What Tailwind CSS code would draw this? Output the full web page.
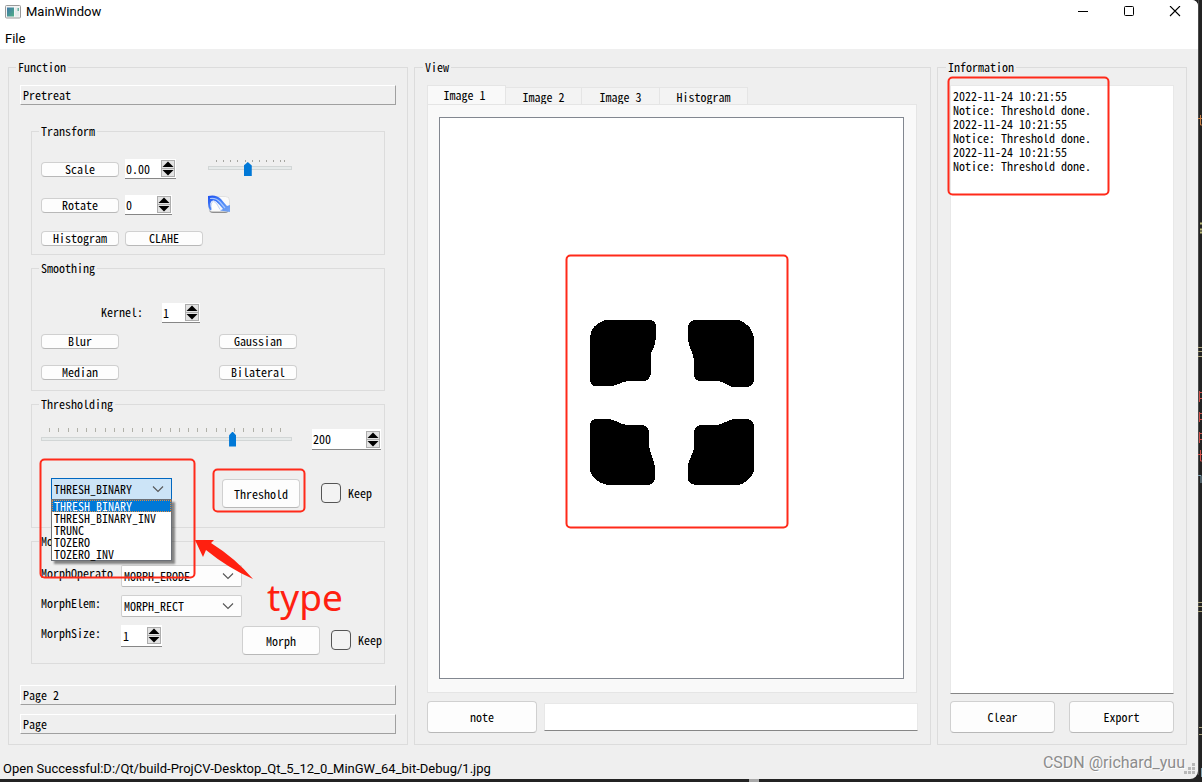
<!DOCTYPE html>
<html lang="en">
<head>
<meta charset="utf-8">
<title>MainWindow</title>
<script src="https://cdn.jsdelivr.net/npm/@tailwindcss/browser@4"></script>
</head>
<body class="relative flex h-screen flex-col overflow-hidden bg-[#232323] pr-1 pb-[3px] font-['Noto_Sans_Mono_CJK_SC','Liberation_Mono',monospace] text-[12px] leading-[14px] text-black">

<!-- arrow pair and chevron shared by the controls -->
<svg class="hidden" aria-hidden="true">
  <symbol id="up" viewBox="0 0 12 7"><path d="M6 .5 L11.500 6 H.5 Z" fill="#000"/></symbol>
  <symbol id="down" viewBox="0 0 12 7"><path d="M.5 1 H11.500 L6 6.500 Z" fill="#000"/></symbol>
  <symbol id="chev" viewBox="0 0 12 8"><path d="M1 1.5 L6 6.5 L11 1.5" fill="none" stroke="#555" stroke-width="1.1"/></symbol>
</svg>

<div class="flex min-h-0 flex-1 flex-col overflow-hidden rounded-tr-md rounded-br-lg bg-[#efefef]">
  <header class="bg-white font-['Roboto','Noto_Sans',sans-serif] text-[13px]">
    <div class="flex h-6 items-center pl-[5px]">
      <svg class="h-[14px] w-4" viewBox="0 0 16 14" aria-hidden="true">
        <defs><linearGradient id="g1" x1="0" y1="0" x2="1" y2="1"><stop offset="0" stop-color="#3f77a8"/><stop offset="1" stop-color="#4fae86"/></linearGradient></defs>
        <rect x=".5" y=".5" width="15" height="12.500" rx="1" fill="#f4f4f4" stroke="#9a9a9a"/>
        <rect x="2" y="2.500" width="7" height="9" fill="url(#g1)"/>
        <rect x="10" y="2.500" width="4" height="9" fill="#e4ecec"/><rect x="12.500" y="3" width="1.500" height="3" fill="#69b0a0"/>
      </svg>
      <h1 class="ml-[5px] flex-1">MainWindow</h1>
      <button class="flex h-6 w-[46px] items-center justify-center" aria-label="Minimize"><svg class="size-3" viewBox="0 0 12 12"><path d="M1 5.500H11" stroke="#000"/></svg></button>
      <button class="flex h-6 w-[46px] items-center justify-center" aria-label="Maximize"><svg class="size-3" viewBox="0 0 12 12"><rect x="1.500" y=".5" width="9" height="9" rx="1" fill="none" stroke="#000"/></svg></button>
      <button class="flex h-6 w-[46px] items-center justify-center" aria-label="Close"><svg class="size-3" viewBox="0 0 12 12"><path d="M1 0L11 10M11 0L1 10" stroke="#000" stroke-width="1.100"/></svg></button>
    </div>
    <nav class="flex h-[25px] items-center pt-1 pl-[5px]"><button>File</button></nav>
  </header>

  <main class="flex min-h-0 flex-1 gap-[6px] pt-[11px] pr-[11px] pl-2">

    <!-- Function -->
    <fieldset class="w-[400px] shrink-0 border border-[#dcdcdc] px-[11px] pb-[10px]">
      <legend class="-ml-1 px-[2px]">Function</legend>
      <div class="flex h-full flex-col pt-[11px]">
        <button class="h-5 border border-t-white border-r-[#a0a0a0] border-b-[#a0a0a0] border-l-white pl-[2px] text-left">Pretreat</button>

        <div class="mx-[11px] mt-[19px] flex flex-1 flex-col gap-[6px]">
          <fieldset class="h-[131px] border border-[#dcdcdc] px-[9px]">
            <legend class="-ml-[2px] px-[2px]">Transform</legend>
            <div class="flex flex-col gap-4 pt-[21px]">
              <div class="flex h-5 items-center">
                <button class="h-[15px] w-[78px] rounded-[4px] border border-[#d0d0d0] border-b-[#b8b8b8] bg-[#fdfdfd] pb-[2px] leading-[11px]">Scale</button>
                <div class="ml-[6px] flex h-5 w-[51px] items-center border-b border-[#868686] bg-white pr-px">
                  <input class="min-w-0 flex-1 pl-[1px] outline-none" value="0.00" aria-label="Scale factor">
                  <span class="flex h-[17px] w-[14px] flex-col border border-[#adadad] bg-[#e3e3e3]"><button class="flex-1 border-b border-[#adadad]" aria-label="Increase"><svg class="mx-auto h-[7px] w-3"><use href="#up"/></svg></button><button class="flex-1" aria-label="Decrease"><svg class="mx-auto h-[7px] w-3"><use href="#down"/></svg></button></span>
                </div>
                <div class="ml-8 flex h-[18px] w-[84px] flex-col">
                  <svg class="h-[2px] w-full" viewBox="0 0 84 2"><path d="M8.500 0V2M15.500 0V2M22.500 0V2M29.500 0V2M37.500 0V2M44.500 0V2M51.500 0V2M58.500 0V2M65.500 0V2M72.500 0V2M76.500 0V2" stroke="#a5a5a0"/></svg>
                  <input type="range" min="0" max="100" value="47" aria-label="Scale slider" class="h-3 w-full appearance-none bg-transparent [&::-webkit-slider-runnable-track]:h-1 [&::-webkit-slider-runnable-track]:border [&::-webkit-slider-runnable-track]:border-[#d2d6d6] [&::-webkit-slider-runnable-track]:bg-[#e6eaea] [&::-webkit-slider-thumb]:-mt-[5px] [&::-webkit-slider-thumb]:h-[14px] [&::-webkit-slider-thumb]:w-2 [&::-webkit-slider-thumb]:appearance-none [&::-webkit-slider-thumb]:bg-[#0078d7] [&::-webkit-slider-thumb]:[clip-path:polygon(50%_0,100%_25%,100%_100%,0_100%,0_25%)]">
                </div>
              </div>
              <div class="flex h-5 items-center">
                <button class="h-[15px] w-[78px] rounded-[4px] border border-[#d0d0d0] border-b-[#b8b8b8] bg-[#fdfdfd] pb-[2px] leading-[11px]">Rotate</button>
                <div class="ml-[6px] flex h-5 w-[47px] items-center border-b border-[#868686] bg-white pr-px">
                  <input class="min-w-0 flex-1 pl-[1px] outline-none" value="0" aria-label="Rotation angle">
                  <span class="flex h-[17px] w-[14px] flex-col border border-[#adadad] bg-[#e3e3e3]"><button class="flex-1 border-b border-[#adadad]" aria-label="Increase"><svg class="mx-auto h-[7px] w-3"><use href="#up"/></svg></button><button class="flex-1" aria-label="Decrease"><svg class="mx-auto h-[7px] w-3"><use href="#down"/></svg></button></span>
                </div>
                <button class="ml-9 pb-[2px]" aria-label="Rotate right">
                  <svg class="h-[18px] w-[22px]" viewBox="0 0 22 18">
                    <defs><linearGradient id="g2" x1="0" y1="0" x2="1" y2="1"><stop offset="0" stop-color="#1d4ff0"/><stop offset=".5" stop-color="#4a86f8"/><stop offset="1" stop-color="#7aa6f0"/></linearGradient></defs>
                    <rect x="1" y="3" width="20" height="15" rx="4" fill="#8f8f8f"/>
                    <rect x=".5" y="1.500" width="21" height="15" rx="4" fill="#fafafa" stroke="#d4d4d4" stroke-width=".6"/>
                    <path d="M0 1Q8 -1 13 4Q17 9 19 11L22 10V17L12 15.500L15 14Q11 9 8 6.500Q4 4 2.500 8Q2 11 4 14L2 15.500Q0 12 0 8Z" fill="url(#g2)"/>
                    <path d="M3.500 14Q2 8 5.500 6Q9 7.500 12 14.500" fill="#fdfdfd" stroke="#b4c8f2" stroke-width=".8"/>
                    <path d="M2 3.500Q8 2.500 12 7L17 13" fill="none" stroke="#a6c6ff" stroke-width="1.200"/>
                  </svg>
                </button>
              </div>
              <div class="flex gap-[6px]">
                <button class="h-[15px] w-[78px] rounded-[4px] border border-[#d0d0d0] border-b-[#b8b8b8] bg-[#fdfdfd] pb-[2px] leading-[11px]">Histogram</button>
                <button class="h-[15px] w-[78px] rounded-[4px] border border-[#d0d0d0] border-b-[#b8b8b8] bg-[#fdfdfd] pb-[2px] leading-[11px]">CLAHE</button>
              </div>
            </div>
          </fieldset>

          <fieldset class="h-[130px] border border-[#dcdcdc] px-[9px]">
            <legend class="-ml-[2px] px-[2px]">Smoothing</legend>
            <div class="flex flex-col pt-7">
              <div class="flex h-5 items-center pl-[60px]">
                <label for="kernel" class="w-[61px] pb-[2px]">Kernel:</label>
                <div class="flex h-5 w-[38px] items-center border-b border-[#868686] bg-white pr-px">
                  <input id="kernel" class="min-w-0 flex-1 pl-[1px] outline-none" value="1">
                  <span class="flex h-[17px] w-[14px] flex-col border border-[#adadad] bg-[#e3e3e3]"><button class="flex-1 border-b border-[#adadad]" aria-label="Increase"><svg class="mx-auto h-[7px] w-3"><use href="#up"/></svg></button><button class="flex-1" aria-label="Decrease"><svg class="mx-auto h-[7px] w-3"><use href="#down"/></svg></button></span>
                </div>
              </div>
              <div class="mt-[11px] grid grid-cols-[78px_78px] gap-x-[100px] gap-y-4">
                <button class="h-[15px] rounded-[4px] border border-[#d0d0d0] border-b-[#b8b8b8] bg-[#fdfdfd] pb-[2px] leading-[11px]">Blur</button>
                <button class="h-[15px] rounded-[4px] border border-[#d0d0d0] border-b-[#b8b8b8] bg-[#fdfdfd] pb-[2px] leading-[11px]">Gaussian</button>
                <button class="h-[15px] rounded-[4px] border border-[#d0d0d0] border-b-[#b8b8b8] bg-[#fdfdfd] pb-[2px] leading-[11px]">Median</button>
                <button class="h-[15px] rounded-[4px] border border-[#d0d0d0] border-b-[#b8b8b8] bg-[#fdfdfd] pb-[2px] leading-[11px]">Bilateral</button>
              </div>
            </div>
          </fieldset>

          <fieldset class="h-[131px] border border-[#dcdcdc] pl-[9px]">
            <legend class="-ml-[2px] px-[2px]">Thresholding</legend>
            <div class="flex flex-col pt-[17px]">
              <div class="flex h-[22px] items-start">
                <div class="flex w-[251px] flex-col">
                  <svg class="h-1 w-full" viewBox="0 0 251 4"><path d="M8.500 0V4M17.500 0V4M27.500 0V4M36.500 0V4M45.500 0V4M54.500 0V4M64.500 0V4M73.500 0V4M82.500 0V4M91.500 0V4M101.500 0V4M110.500 0V4M119.500 0V4M129.500 0V4M138.500 0V4M147.500 0V4M156.500 0V4M165.500 0V4M175.500 0V4M184.500 0V4M193.500 0V4M202.500 0V4M212.500 0V4M221.500 0V4M230.500 0V4M239.500 0V4" stroke="#b0b0a8"/></svg>
                  <input type="range" min="0" max="1000" value="773" aria-label="Threshold slider" class="h-[13px] w-full appearance-none bg-transparent [&::-webkit-slider-runnable-track]:h-1 [&::-webkit-slider-runnable-track]:border [&::-webkit-slider-runnable-track]:border-[#d2d6d6] [&::-webkit-slider-runnable-track]:bg-[#e6eaea] [&::-webkit-slider-thumb]:-mt-[6px] [&::-webkit-slider-thumb]:h-[15px] [&::-webkit-slider-thumb]:w-[7px] [&::-webkit-slider-thumb]:appearance-none [&::-webkit-slider-thumb]:bg-[#0078d7] [&::-webkit-slider-thumb]:[clip-path:polygon(50%_0,100%_25%,100%_100%,0_100%,0_25%)]">
                </div>
                <div class="mt-px ml-5 flex h-[21px] w-[69px] items-center border-b border-[#868686] bg-white pr-px">
                  <input class="min-w-0 flex-1 pl-[1px] outline-none" value="200" aria-label="Threshold value">
                  <span class="flex h-[17px] w-[14px] flex-col border border-[#adadad] bg-[#e3e3e3]"><button class="flex-1 border-b border-[#adadad]" aria-label="Increase"><svg class="mx-auto h-[7px] w-3"><use href="#up"/></svg></button><button class="flex-1" aria-label="Decrease"><svg class="mx-auto h-[7px] w-3"><use href="#down"/></svg></button></span>
                </div>
              </div>
              <div class="mt-7 flex items-start pl-[10px]">
                <div class="relative w-[121px]">
                  <select aria-label="Threshold type" class="h-[22px] w-full appearance-none border border-[#0067c0] bg-[#cce4f7] pl-[2px] outline-none"><option>THRESH_BINARY</option><option>THRESH_BINARY_INV</option><option>TRUNC</option><option>TOZERO</option><option>TOZERO_INV</option></select>
                  <svg class="pointer-events-none absolute top-[7px] right-2 h-2 w-3"><use href="#chev"/></svg>
                  <ul role="listbox" class="absolute top-[21px] left-0 z-10 w-[121px] border border-[#6b6f76] bg-white leading-3 shadow-[3px_3px_2px_rgba(0,0,0,0.45)]">
                    <li role="option" aria-selected="true" class="h-3 bg-[#0078d7] pl-[2px] text-white outline outline-dotted -outline-offset-1 outline-[#e08a3c]">THRESH_BINARY</li>
                    <li role="option" class="h-3 pl-[2px]">THRESH_BINARY_INV</li>
                    <li role="option" class="h-3 pl-[2px]">TRUNC</li>
                    <li role="option" class="h-3 pl-[2px]">TOZERO</li>
                    <li role="option" class="h-3 pl-[2px]">TOZERO_INV</li>
                  </ul>
                </div>
                <button class="mt-px ml-[50px] h-[29px] w-[78px] rounded-[4px] border border-[#d0d0d0] border-b-[#b8b8b8] bg-[#fdfdfd]">Threshold</button>
                <label class="mt-[5px] ml-[21px] flex items-center gap-[7px]"><input type="checkbox" class="size-5 appearance-none rounded-[4px] border border-[#555] bg-[#f3f3f3]">Keep</label>
              </div>
            </div>
          </fieldset>

          <fieldset class="h-[130px] border border-[#dcdcdc] pl-[9px]">
            <legend class="-ml-[2px] px-[2px]">Morphology</legend>
            <div class="flex pt-[17px]">
              <div class="flex w-20 flex-col gap-4 pt-px">
                <label for="mop">MorphOperato</label>
                <label for="mel">MorphElem:</label>
                <label for="msz">MorphSize:</label>
              </div>
              <div class="flex flex-1 flex-col gap-2">
                <div class="relative w-[121px]">
                  <select id="mop" class="h-[22px] w-full appearance-none rounded-[2px] border border-[#d0d0d0] border-b-[#b8b8b8] bg-[#fdfdfd] pl-[2px]"><option>MORPH_ERODE</option></select>
                  <svg class="pointer-events-none absolute top-[7px] right-2 h-2 w-3"><use href="#chev"/></svg>
                </div>
                <div class="relative w-[121px]">
                  <select id="mel" class="h-[22px] w-full appearance-none rounded-[2px] border border-[#d0d0d0] border-b-[#b8b8b8] bg-[#fdfdfd] pl-[2px]"><option>MORPH_RECT</option></select>
                  <svg class="pointer-events-none absolute top-[7px] right-2 h-2 w-3"><use href="#chev"/></svg>
                </div>
                <div class="flex items-start">
                  <div class="flex h-[22px] w-[41px] items-center border-b border-[#868686] bg-white pr-px">
                    <input id="msz" class="min-w-0 flex-1 pl-[2px] outline-none" value="1">
                    <span class="flex h-[17px] w-[14px] flex-col border border-[#adadad] bg-[#e3e3e3]"><button class="flex-1 border-b border-[#adadad]" aria-label="Increase"><svg class="mx-auto h-[7px] w-3"><use href="#up"/></svg></button><button class="flex-1" aria-label="Decrease"><svg class="mx-auto h-[7px] w-3"><use href="#down"/></svg></button></span>
                  </div>
                  <button class="mt-px ml-20 h-[29px] w-[78px] rounded-[4px] border border-[#d0d0d0] border-b-[#b8b8b8] bg-[#fdfdfd]">Morph</button>
                  <label class="mt-[5px] ml-[11px] flex items-center gap-[7px]"><input type="checkbox" class="size-5 appearance-none rounded-[4px] border border-[#555] bg-[#f3f3f3]">Keep</label>
                </div>
              </div>
            </div>
          </fieldset>
        </div>

        <button class="h-5 border border-t-white border-r-[#a0a0a0] border-b-[#a0a0a0] border-l-white pl-[2px] text-left">Page 2</button>
        <button class="mt-[9px] h-5 border border-t-white border-r-[#a0a0a0] border-b-[#a0a0a0] border-l-white pl-[2px] text-left">Page</button>
      </div>
    </fieldset>

    <!-- View -->
    <fieldset class="min-w-0 flex-1 border border-[#dcdcdc] px-3 pb-[11px]">
      <legend class="-ml-1 px-[2px]">View</legend>
      <div class="flex h-full flex-col pt-[11px]">
        <div role="tablist" class="flex h-[19px] items-end">
          <button role="tab" aria-selected="true" class="-mb-px h-5 w-[79px] border border-b-0 border-[#e5e5e5] bg-[#f9f9f9] pr-1 pb-px">Image 1</button>
          <button role="tab" class="h-[17px] w-[76px] border border-l-0 border-b-0 border-[#e5e5e5] bg-[#f3f3f3] pt-px">Image 2</button>
          <button role="tab" class="h-[17px] w-[78px] border border-l-0 border-b-0 border-[#e5e5e5] bg-[#f3f3f3] pt-px">Image 3</button>
          <button role="tab" class="h-[17px] w-[88px] border border-l-0 border-b-0 border-[#e5e5e5] bg-[#f3f3f3] pt-px">Histogram</button>
        </div>
        <div role="tabpanel" class="mr-px flex min-h-0 flex-1 border border-[#e5e5e5] bg-[#f9f9f9] pt-3 pr-3 pb-[13px] pl-[11px]">
          <div class="flex flex-1 items-center justify-center border border-[#828790] bg-white">
            <!-- thresholded image -->
            <svg class="mt-[10px] h-[168px] w-[168px]" viewBox="588 319 168 168" shape-rendering="crispEdges" role="img" aria-label="Thresholded image">
              <path d="M590 338Q591 324 606 320H650Q656 321 656 327V337Q655 347 651 353V374Q649 381 643 381H628C620 382 616 387 608 386H594Q590 384 590 379Z"/>
              <path d="M688 326Q689 321 695 320H739Q752 325 754 338V381Q753 386 747 387H732C725 384 722 381 716 381H699Q694 380 694 374V360C693 352 688 346 688 339Z"/>
              <path d="M590 425Q591 419 597 419H608C616 419 619 425 628 425H643Q649 427 649 433V446C650 454 655 461 655 468V477Q655 484 648 485H607Q593 481 590 471Z"/>
              <path d="M694 431Q695 426 701 425H716C724 425 727 419 735 419H747Q753 420 754 426V471Q749 483 738 485H696Q688 484 688 478V466C688 458 694 455 694 447Z"/>
            </svg>
          </div>
        </div>
        <div class="mt-2 flex h-8 items-center">
          <button class="h-8 w-[110px] rounded-[4px] border border-[#d0d0d0] border-b-[#b8b8b8] bg-[#fdfdfd]">note</button>
          <input class="ml-[7px] h-7 min-w-0 flex-1 border border-[#e8e8e8] border-b-[#868686] bg-white px-1 outline-none" aria-label="Note text">
        </div>
      </div>
    </fieldset>

    <!-- Information -->
    <fieldset class="w-[250px] shrink-0 border border-[#dcdcdc] px-3 pb-[11px]">
      <legend class="-ml-1 px-[2px]">Information</legend>
      <div class="flex h-full flex-col pt-[11px]">
        <textarea aria-label="Log" readonly class="min-h-0 flex-1 resize-none border border-[#e8e8e8] border-b-[#868686] bg-white px-[2px] pt-[3px] outline-none">2022-11-24 10:21:55
Notice: Threshold done.
2022-11-24 10:21:55
Notice: Threshold done.
2022-11-24 10:21:55
Notice: Threshold done.</textarea>
        <div class="mt-[7px] flex h-8 gap-[14px]">
          <button class="flex-1 rounded-[4px] border border-[#d0d0d0] border-b-[#b8b8b8] bg-[#fdfdfd]">Clear</button>
          <button class="flex-1 rounded-[4px] border border-[#d0d0d0] border-b-[#b8b8b8] bg-[#fdfdfd]">Export</button>
        </div>
      </div>
    </fieldset>
  </main>

  <footer class="flex h-[34px] shrink-0 items-center justify-between pt-[14px] pr-[2px] pl-[3px] font-['Roboto','Noto_Sans',sans-serif] text-[13px]">
    <span>Open Successful:D:/Qt/build-ProjCV-Desktop_Qt_5_12_0_MinGW_64_bit-Debug/1.jpg</span>
    <div class="flex items-center">
      <span class="pb-3 font-['Roboto',sans-serif] text-[16px] text-[#8c8c8c] [text-shadow:1px_1px_0_#fff]">CSDN @richard_yuu</span>
      <svg class="-ml-px size-3" viewBox="0 0 12 12" fill="#b8b8b8" aria-hidden="true"><path d="M8 0h3v3h-3zM4 4h3v3h-3zM8 4h3v3h-3zM0 8h3v3h-3zM4 8h3v3h-3zM8 8h3v3h-3z"/></svg>
    </div>
  </footer>
</div>

<!-- editor window showing behind the right edge -->
<svg class="absolute top-0 right-0 h-[782px] w-1" viewBox="0 0 4 782" fill="none" aria-hidden="true">
  <path d="M.5 0V775" stroke="#4a4a4a"/>
  <path d="M0 118.500H4M2.500 115V125H4" stroke="#c87f45"/>
  <path d="M2 223.500H4M2 229.500H4M2 232.500H4" stroke="#b8b878" stroke-width="2"/>
  <path d="M0 347.500H4M0 351.500H4M0 356.500H4M0 602.500H4M0 606.500H4M0 611.500H4M1 727.500H4M1 734.500H4" stroke="#a8a078"/>
  <path d="M1.500 391V402M1.500 392.500H4M1.500 398.500H4M1.500 412V422M1.500 413.500H4M1.500 419.500H4M1.500 432V443M1.500 433.500H4M1.500 439.500H4M0 454.500H4M2.500 450V461H4" stroke="#d0524c"/>
  <path d="M0 475.500H3V483M3.500 768V777" stroke="#7fa0b0"/>
</svg>
<!-- editor window showing below the bottom edge -->
<div class="absolute bottom-0 left-[749px] h-[3px] w-[10px] bg-[#a8a8a8]"></div>

<!-- red call-outs over the window -->
<svg class="pointer-events-none absolute top-0 left-0 z-20 h-[782px] w-[1202px]" viewBox="0 0 1202 782" aria-hidden="true">
  <g fill="none" stroke="#ff2a1a" stroke-width="2">
    <rect x="40.500" y="459.500" width="154" height="118" rx="4"/>
    <rect x="213.500" y="469.500" width="91" height="42" rx="4"/>
    <rect x="566.500" y="255.500" width="221" height="272" rx="4"/>
    <rect x="948.500" y="77.500" width="160" height="117" rx="4"/>
  </g>
  <path d="M195 540L214 540L211 543Q235 558 253 579Q228 568 206 550L203 557Z" fill="#ff2010"/>
</svg>
<p class="absolute top-[577px] left-[267px] z-20 font-['Noto_Sans',sans-serif] text-[37px] leading-[40px] text-[#ff2010]">type</p>
</body>
</html>
